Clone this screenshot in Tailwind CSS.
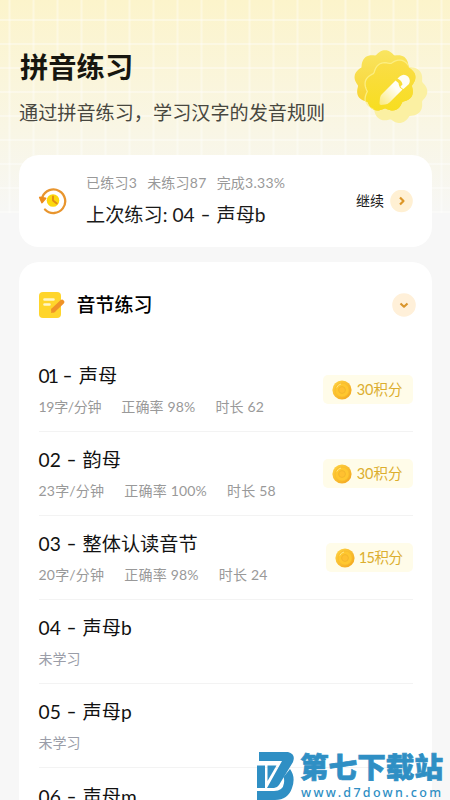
<!DOCTYPE html>
<html lang="zh-CN">
<head>
<meta charset="utf-8">
<meta name="viewport" content="width=device-width, initial-scale=1">
<title>拼音练习</title>
<script src="https://cdn.jsdelivr.net/npm/@tailwindcss/browser@4"></script>
</head>
<body class="bg-[#f7f7f7]">
<svg width="0" height="0" class="absolute">
  <defs>
    <linearGradient id="coinFill" x1="0" y1="0" x2="1" y2="1"><stop offset="0" stop-color="#ffd545"/><stop offset="1" stop-color="#f3a41c"/></linearGradient>
    <symbol id="coin" viewBox="0 0 20 20">
      <circle cx="10" cy="10" r="9.6" fill="url(#coinFill)"/>
      <circle cx="10" cy="10" r="7" fill="#ffc72f" stroke="#f6bb2e" stroke-width=".7"/>
      <circle cx="10" cy="10" r="3.4" fill="#ffc030" stroke="#f2b52b" stroke-width=".9"/>
      <path d="M4.8 7.5A6 6 0 0 1 9 4" fill="none" stroke="#ffe682" stroke-width="1"/>
    </symbol>
  </defs>
</svg>
<div class="relative h-[800px] w-[450px] overflow-hidden font-['Lato','Noto_Sans_CJK_SC',sans-serif] text-[#1a1a1a]">
  <div class="absolute inset-x-0 top-0 h-[213px] bg-linear-to-b from-[#fcf4cb] to-[#f7f7f5]">
    <div class="h-full bg-[linear-gradient(to_right,#ffffff59_2px,transparent_2px),linear-gradient(to_bottom,#ffffff59_2px,transparent_2px)] bg-[length:24px_24px] bg-[position:8.5px_19px]"></div>
  </div>

  <main class="relative flex flex-col px-[19px]">
    <header class="flex h-[155px] justify-between">
      <div class="pt-[46px]">
        <h1 class="pl-px text-[28.3px] leading-[42px] font-bold text-[#17160f]">拼音练习</h1>
        <p class="mt-[11px] text-[19.15px] leading-[28px] whitespace-nowrap text-[#48473f]">通过拼音练习，学习汉字的发音规则</p>
      </div>
      <svg class="mt-[46px] mr-[2px] shrink-0" width="80" height="80" viewBox="349 46 80 80">
        <defs>
          <linearGradient id="sealBack" x1="0" y1="0" x2="0" y2="1"><stop offset="0" stop-color="#f9e560"/><stop offset="1" stop-color="#f8d12c"/></linearGradient>
          <linearGradient id="sealFront" x1="0" y1="0" x2="0" y2="1"><stop offset="0" stop-color="#fadd48"/><stop offset="1" stop-color="#f7de16"/></linearGradient>
          <linearGradient id="penFill" x1="1" y1="0" x2="0" y2="1"><stop offset=".3" stop-color="#fffef5"/><stop offset="1" stop-color="#fbea7c"/></linearGradient>
          <clipPath id="sealClip"><path data-seal="385,81,29.5,90"/></clipPath>
        </defs>
        <path data-seal="395.500,91.500,30.500,0" fill="#fbf0a2"/>
        <path data-seal="385,81,29.5,90" fill="url(#sealBack)"/>
        <g clip-path="url(#sealClip)"><path data-seal="395.500,91.500,30.500,0" fill="url(#sealFront)" stroke="#fcee80" stroke-width="1.300"/></g>
        <path d="M379.500 103L380 98Q380.300 95.500 382 94L395.500 80.500L398.500 83Q399 88 402.500 89.500L389.500 102.500Q387.500 104.500 385 104.500L381 105Q379.300 105 379.500 103Z" fill="url(#penFill)"/>
        <path d="M397.500 78.500L400 76.200Q404 73 408 76.500Q411 80 409 84L403.500 89Q401.500 88.500 400.500 86.500L402.500 84.500Q402 80.500 397.500 78.500Z" fill="#fffef3"/>
      </svg>
    </header>

    <section class="flex h-[92px] w-[413px] items-center rounded-[20px] bg-white pr-[19px] pl-[19px]">
      <svg width="29" height="29" viewBox="0 0 29 29" fill="none">
        <path d="M4.400 10A11.800 11.800 0 1 1 7 22.500" stroke="#e8952e" stroke-width="2.300" stroke-linecap="round"/>
        <path d="M1.800 10.500L7.500 11.500L4 15.500Z" fill="#ed8b1c" stroke="#ed8b1c" stroke-width="1.800" stroke-linejoin="round"/>
        <circle cx="15" cy="13.500" r="6.300" fill="#fcd80d"/>
        <path d="M15 9.500V13.500L18.800 16.500" stroke="#e18b16" stroke-width="1.800" stroke-linecap="round" stroke-linejoin="round"/>
      </svg>
      <div class="ml-[19px] whitespace-nowrap">
        <div class="flex gap-[10px] text-[14px] leading-5 tracking-[.25px] text-[#999]"><span>已练习3</span><span>未练习87</span><span>完成3.33%</span></div>
        <div class="mt-[7px] text-[19.200px] leading-[30px]">上次练习: 04 <span class="relative -top-px mx-[2.400px] inline-block scale-x-140">-</span> 声母b</div>
      </div>
      <div class="ml-auto flex items-center gap-[6px] text-[14px]">
        <span class="relative -top-px">继续</span>
        <svg width="23" height="23" viewBox="0 0 23 23"><circle cx="11.500" cy="11" r="11.300" fill="#fff0d3"/><path d="M10 7.500L13.500 11L10 14.500" fill="none" stroke="#dc9628" stroke-width="2.200" stroke-linejoin="round"/></svg>
      </div>
    </section>

    <section class="mt-[15px] w-[413px] rounded-t-[20px] bg-white px-[19.500px]">
      <div class="flex h-[86px] items-center">
        <svg width="26" height="28" viewBox="0 0 26 28">
          <rect x="0" y="1" width="22" height="26" rx="4" fill="#ffd52b"/>
          <path d="M5.500 8.500H14.500M5.500 13.500H10.500" stroke="#fff6c9" stroke-width="2.600" stroke-linecap="round"/>
          <path d="M14.500 19L23 11" stroke="#ef9228" stroke-width="4.600" stroke-linecap="round"/>
          <path d="M12.800 17L16.500 21L12 22Z" fill="#ef9228"/>
        </svg>
        <h2 class="ml-[12px] text-[19px] font-medium text-black">音节练习</h2>
        <svg class="-mr-[3px] ml-auto" width="24" height="24" viewBox="0 0 24 24"><circle cx="12" cy="12" r="11.800" fill="#fff0d9"/><path d="M8.500 10.500L12 13.700L15.500 10.500" fill="none" stroke="#d9952c" stroke-width="2.200" stroke-linejoin="round"/></svg>
      </div>
      <ul id="lessons"></ul>
    </section>
  </main>

  <div class="absolute top-[751px] left-[257px] flex">
    <svg width="37" height="49" viewBox="0 0 37 49" fill="#2f8fc4">
      <path d="M2 1H31Q39 3 36 11L22 34Q20 37 17 37H10L25 10H2Z"/>
      <path d="M0 14.500H8V37H0Z"/>
      <path d="M10.500 14.500H19.500L10.500 30Z"/>
      <path d="M33 18Q39 26 35 37Q31 49 18 49H0V40H17Q26 40 27 32Q27.500 28 26.500 26Z"/>
    </svg>
    <div class="ml-[6px] text-[#2f8fc4]">
      <div class="text-[28.600px] leading-[32px] font-black [-webkit-text-stroke:0.700px_#2f8fc4]">第七下载站</div>
      <div class="mt-[2px] ml-px font-['Noto_Sans',sans-serif] text-[12.500px] leading-[16px] font-medium tracking-[2.300px]">www.d7down.com</div>
    </div>
  </div>
</div>
<script>
  // Scalloped outlines: centre x, centre y, mean radius, phase in degrees.
  document.querySelectorAll('[data-seal]').forEach(path => {
    const [x, y, radius, phase] = path.dataset.seal.split(',').map(Number);
    const points = [];
    for (let degree = 0; degree < 360; degree += 3) {
      const angle = degree * Math.PI / 180;
      const r = radius - 2.3 + 3.6 * Math.pow(Math.abs(Math.cos(4.5 * (angle + phase * Math.PI / 180))), 1.1);
      points.push((x + r * Math.cos(angle)).toFixed(2) + ' ' + (y + r * Math.sin(angle)).toFixed(2));
    }
    path.setAttribute('d', 'M' + points.join('L') + 'Z');
  });
  const lessons = [
    ['01', '声母', ['19字/分钟', '正确率 98%', '时长 62'], '30积分'],
    ['02', '韵母', ['23字/分钟', '正确率 100%', '时长 58'], '30积分'],
    ['03', '整体认读音节', ['20字/分钟', '正确率 98%', '时长 24'], '15积分'],
    ['04', '声母b', null], ['05', '声母p', null], ['06', '声母m', null]
  ];
  document.getElementById('lessons').innerHTML = lessons.map(([number, title, stats, points]) => `
    <li class="flex h-[84.100px] items-center justify-between border-b border-[#f3f3f3] whitespace-nowrap">
      <div class="relative -top-[.5px]">
        <div class="text-[19.200px] leading-[30px] text-[#111]"><span class="${number === '01' ? 'tracking-[-1.900px]' : ''}">${number}</span> <span class="relative -top-px mx-[2.400px] inline-block scale-x-140">-</span> ${title}</div>
        ${stats ? `<div class="mt-[6px] flex gap-[20px] text-[14px] leading-5 text-[#999]">${stats.map((s, i) => `<span class="${number === '01' ? (i ? 'tracking-[.150px]' : 'tracking-[-.300px]') : 'tracking-[.200px]'}">${s}</span>`).join('')}</div>`
                : '<div class="mt-[6px] text-[14px] leading-5 text-[#9a9da8]">未学习</div>'}
      </div>
      ${points ? `<div class="flex h-[29px] items-center gap-[5px] rounded-[5px] bg-[#fffce9] pr-[10px] pl-[9px] text-[14.500px] text-[#dcae2e]"><svg width="20" height="20"><use href="#coin"/></svg><span class="${points === '15积分' ? '-ml-px tracking-[-.500px]' : ''}">${points}</span></div>` : ''}
    </li>`).join('');
</script>
</body>
</html>
